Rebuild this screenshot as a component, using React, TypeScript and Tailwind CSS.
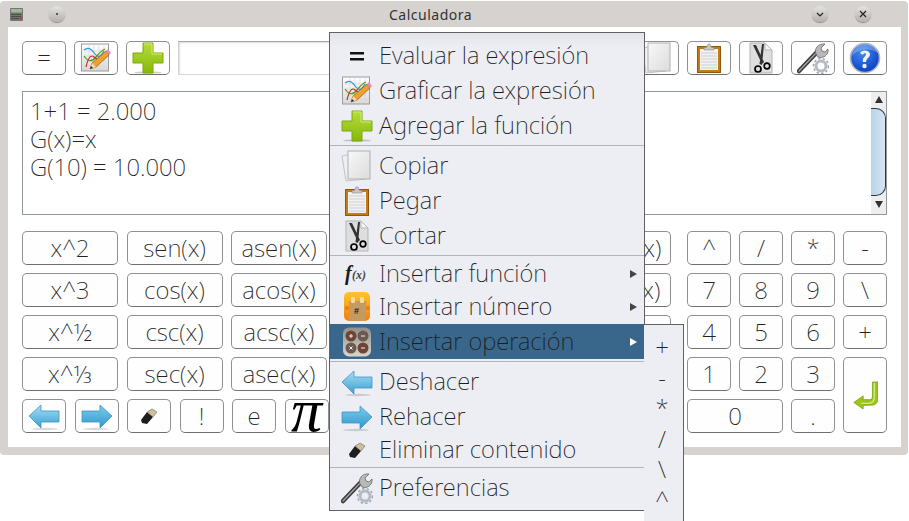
import type { ReactNode } from "react";

function Eq({ size = 32 }: { size?: number }) {
  return (
    <svg width={size} height={size} viewBox="0 0 32 32">
      <path d="M9 12h14v2.5H9zM9 18h14v2.5H9z" fill="#111" />
    </svg>
  );
}

function Graph({ size = 32 }: { size?: number }) {
  return (
    <svg width={size} height={size} viewBox="0 0 32 32">
      <defs>
        <linearGradient id="gr" x1="0" y1="0" x2="0" y2="1">
          <stop offset="0" stopColor="#ffffff" />
          <stop offset="1" stopColor="#d8d8d8" />
        </linearGradient>
      </defs>
      <rect x="1.500" y="2" width="27" height="27" fill="url(#gr)" stroke="#9a9a9a" />
      <path d="M4 9h22M4 14h22M4 19h22M4 24h22M9 3v24M14 3v24M19 3v24M24 3v24" stroke="#d9d9d9" strokeWidth=".7" />
      <path d="M4 8c5-4 8 0 11 4s6 3 9-3" fill="none" stroke="#2f9bd6" strokeWidth="1.2" />
      <path d="M4 14c4 6 8 6 12 1s6-7 9-8" fill="none" stroke="#5a9a17" strokeWidth="1.3" />
      <path d="M6 25c2-9 5-13 8-10s5 3 8-3" fill="none" stroke="#c8342b" strokeWidth="1.2" />
      <path d="M10 27l2-6 14-12 3 4-13 12z" fill="#f0a030" stroke="#8a5a10" strokeWidth=".7" />
      <path d="M10 27l2-6 4 4z" fill="#f5dcb0" />
      <path d="M10 27l1-3 2 2z" fill="#222" />
      <path d="M26 9l2-2 3 4-2 2z" fill="#e48bc0" />
    </svg>
  );
}

function Plus({ size = 32 }: { size?: number }) {
  return (
    <svg width={size} height={size} viewBox="0 0 32 32">
      <defs>
        <linearGradient id="pl" x1="0" y1="0" x2="0" y2="1">
          <stop offset="0" stopColor="#b6dd3a" />
          <stop offset="1" stopColor="#86b80c" />
        </linearGradient>
      </defs>
      <ellipse cx="16" cy="30.5" rx="14" ry="1.2" fill="#00000030" />
      <path d="M11 1h10v10h10v10H21v10H11V21H1V11h10z" fill="url(#pl)" stroke="#7fa80a" />
      <path d="M12 2h8v10h10" fill="none" stroke="#d4ee7c" />
    </svg>
  );
}

function Copy({ size = 32 }: { size?: number }) {
  return (
    <svg width={size} height={size} viewBox="0 0 32 32">
      <defs>
        <linearGradient id="cp" x1="0" y1="0" x2="1" y2="1">
          <stop offset="0" stopColor="#f8f8f8" />
          <stop offset="1" stopColor="#dcdcdc" />
        </linearGradient>
      </defs>
      <path d="M1 6l10-2v24l14 1-20 2z" fill="#eeeeee" stroke="#c4c4c4" />
      <rect x="7" y="1" width="22" height="28" fill="url(#cp)" stroke="#b0b0b0" />
    </svg>
  );
}

function Paste({ size = 32 }: { size?: number }) {
  return (
    <svg width={size} height={size} viewBox="0 0 32 32">
      <rect x="4.5" y="4.5" width="23" height="26" fill="#c47c12" stroke="#8f5a0c" />
      <rect x="7" y="7" width="18" height="21" fill="#f2f2f2" />
      <path d="M8 11h16M8 14h16M8 17h16M8 20h16M8 23h16M8 26h16" stroke="#cfcfcf" />
      <path d="M11 8V6l3-1 1-3h2l1 3 3 1v2z" fill="#c8c8c8" stroke="#8f8f8f" strokeWidth=".6" />
    </svg>
  );
}

function Cut({ size = 32 }: { size?: number }) {
  return (
    <svg width={size} height={size} viewBox="0 0 32 32">
      <path d="M5 1h15l7 7v23H5z" fill="#dedede" stroke="#b5b5b5" />
      <path d="M20 1v7h7z" fill="#f6f6f6" stroke="#b5b5b5" />
      <path d="M8 3l3 0 8 17-2 2zM17 2l2 0-2 21-2.500-1z" fill="#333" />
      <circle cx="13" cy="27" r="3" fill="none" stroke="#000" strokeWidth="1.7" />
      <circle cx="22" cy="24" r="2.800" fill="none" stroke="#000" strokeWidth="1.7" />
    </svg>
  );
}

function Tools({ size = 32 }: { size?: number }) {
  return (
    <svg width={size} height={size} viewBox="0 0 32 32">
      <path d="M2 29L21 9" stroke="#3c3c3c" strokeWidth="4.500" strokeLinecap="round" />
      <path d="M2 29L21 9" stroke="#a8a8a8" strokeWidth="1.200" strokeLinecap="round" />
      <path d="M19 12c-2-5 2-11 9-10l-4 4 1 3 3 1 3-3c1 6-5 10-10 8z" fill="#b8b8b8" stroke="#666" strokeWidth=".8" />
      <circle cx="24" cy="24" r="5" fill="none" stroke="#b4bac4" strokeWidth="3" />
      <circle cx="24" cy="24" r="7.500" fill="none" stroke="#a3a9b3" strokeWidth="1.600" strokeDasharray="2.400 2.200" />
    </svg>
  );
}

function Help({ size = 32 }: { size?: number }) {
  return (
    <svg width={size} height={size} viewBox="0 0 32 32">
      <defs>
        <radialGradient id="hp" cx=".4" cy=".3" r=".8">
          <stop offset="0" stopColor="#3f8bf0" />
          <stop offset="1" stopColor="#0636c0" />
        </radialGradient>
      </defs>
      <circle cx="16" cy="16" r="14.500" fill="url(#hp)" stroke="#aeb4bb" strokeWidth="1.600" />
      <path d="M3 14c6-7 17-9 26-3-2-6-7-9-13-9C9 2 4 8 3 14z" fill="#ffffff40" />
      <path d="M11 11c1-3 9-4 10 1 0 4-4 4-4 8h-3c-1-5 3-5 3-8 0-1-3-1-3 1z" fill="#f0f0f0" />
      <circle cx="15.500" cy="24" r="2.200" fill="#f0f0f0" />
    </svg>
  );
}

function ArrowLeft({ size = 32 }: { size?: number }) {
  return (
    <svg width={size} height={size} viewBox="0 0 32 32">
      <defs>
        <linearGradient id="al" x1="0" y1="0" x2="0" y2="1">
          <stop offset="0" stopColor="#a8def4" />
          <stop offset="1" stopColor="#38a0d2" />
        </linearGradient>
      </defs>
      <ellipse cx="17" cy="29" rx="13" ry="1.200" fill="#00000025" />
      <path d="M1 16L13 5v6h18v11H13v6z" fill="url(#al)" stroke="#3d94c0" strokeWidth=".8" />
    </svg>
  );
}

function ArrowRight({ size = 32 }: { size?: number }) {
  return (
    <svg width={size} height={size} viewBox="0 0 32 32">
      <defs>
        <linearGradient id="ar" x1="0" y1="0" x2="0" y2="1">
          <stop offset="0" stopColor="#7fcbec" />
          <stop offset="1" stopColor="#2f98cc" />
        </linearGradient>
      </defs>
      <ellipse cx="15" cy="29" rx="13" ry="1.200" fill="#00000025" />
      <path d="M31 16L19 5v6H1v11h18v6z" fill="url(#ar)" stroke="#3d94c0" strokeWidth=".8" />
    </svg>
  );
}

function Eraser({ size = 20 }: { size?: number }) {
  return (
    <svg width={size} height={size} viewBox="0 0 20 20">
      <path d="M2 14l6-8 6 5-6 7-5-1z" fill="#1e1e1e" />
      <path d="M8 6l5-3 5 3-4 5z" fill="#cfbd9c" stroke="#555" strokeWidth=".5" />
    </svg>
  );
}

function Enter() {
  return (
    <svg width="26" height="30" viewBox="0 0 28 32">
      <path d="M22 2h6v17c0 6-3 8-8 8H12v4L2 24l10-7v4h7c2 0 3-1 3-3z" fill="#9cc61c" stroke="#6f9a0a" strokeWidth=".8" />
      <path d="M24 3v15c0 5-2 7-6 7h-8" fill="none" stroke="#d4ee7c" strokeWidth="1.400" />
    </svg>
  );
}

function Fx() {
  return (
    <svg width="32" height="32" viewBox="0 0 32 32">
      <text x="4" y="22" fontFamily="'Liberation Serif',serif" fontWeight="700" fontStyle="italic" fontSize="20" fill="#1a1a1a">f</text>
      <text x="11" y="21" fontFamily="'Liberation Serif',serif" fontWeight="700" fontStyle="italic" fontSize="12" fill="#444">(x)</text>
    </svg>
  );
}

function NumberIcon() {
  return (
    <svg width="32" height="32" viewBox="0 0 32 32">
      <defs>
        <linearGradient id="nb" x1="0" y1="0" x2="0" y2="1">
          <stop offset="0" stopColor="#ffc42c" />
          <stop offset="1" stopColor="#f07e12" />
        </linearGradient>
      </defs>
      <rect x="3" y="1" width="26" height="29" rx="5" fill="url(#nb)" />
      <rect x="8" y="10" width="17" height="20" fill="#c39a5f" />
      <rect x="10" y="6" width="4" height="6" rx="1" fill="#f5dc96" />
      <rect x="19" y="6" width="4" height="6" rx="1" fill="#f5dc96" />
      <circle cx="6" cy="17" r="2" fill="#e87a12" />
      <circle cx="27" cy="17" r="2" fill="#e87a12" />
      <text x="13" y="23" fontFamily="'Liberation Sans',sans-serif" fontWeight="700" fontSize="9" fill="#222">#</text>
    </svg>
  );
}

function OperIcon() {
  return (
    <svg width="32" height="32" viewBox="0 0 32 32">
      <defs>
        <linearGradient id="op" x1="0" y1="0" x2="0" y2="1">
          <stop offset="0" stopColor="#8f8f8c" />
          <stop offset="1" stopColor="#d8d5cc" />
        </linearGradient>
      </defs>
      <rect x="2" y="1.500" width="28" height="29" rx="6" fill="url(#op)" />
      <circle cx="10" cy="10" r="5.500" fill="#6e4436" />
      <circle cx="22" cy="10" r="5.500" fill="#6c5a50" />
      <circle cx="10" cy="22" r="5.500" fill="#6c5a50" />
      <circle cx="22" cy="22" r="5.500" fill="#6e4436" />
      <path d="M8 10h4M10 8v4M20 10h4M8.500 20.500l3 3M11.500 20.500l-3 3M20 22h4" stroke="#eee" strokeWidth="1" />
    </svg>
  );
}

function CalcIcon() {
  return (
    <svg width="15" height="15" viewBox="0 0 15 15">
      <rect x="1" y="1" width="13" height="13" rx="1" fill="#74766f" />
      <rect x="2" y="2" width="11" height="3.500" fill="#9db79b" />
      <path d="M2.500 7.500h10M2.500 9.500h10M2.500 11.500h8" stroke="#2e2f2d" strokeDasharray="1.200 .8" />
      <rect x="11" y="10.500" width="2" height="2" fill="#c0392b" />
    </svg>
  );
}

function Key({ className = "", children }: { className?: string; children: ReactNode }) {
  return (
    <div className={`flex items-center justify-center rounded-[5px] border border-[#8f9090] border-b-[#6f7070] bg-[#fefefe] text-[#222] ${className}`}>
      {children}
    </div>
  );
}

function WinBtn({ children }: { children?: ReactNode }) {
  return (
    <div className="flex h-[16px] w-[16px] items-center justify-center rounded-full bg-gradient-to-b from-[#e6e4e2] to-[#b3b0ad] shadow-[0_1px_1px_#8d8a87]">
      {children}
    </div>
  );
}

const funcRows = [
  ["x^2", "sen(x)", "asen(x)", "senh(x)"],
  ["x^3", "cos(x)", "acos(x)", "cosh(x)"],
  ["x^½", "csc(x)", "acsc(x)", "csch(x)"],
  ["x^⅓", "sec(x)", "asec(x)", "sech(x)"],
];

const padRows = [
  ["^", "/", "*", "-"],
  ["7", "8", "9", "\\"],
  ["4", "5", "6", "+"],
];

function Item({
  icon,
  label,
  arrow,
  active,
  h = "h-[35px]",
}: {
  icon?: ReactNode;
  label: string;
  arrow?: boolean;
  active?: boolean;
  h?: string;
}) {
  return (
    <div className={`flex items-center ${h} ${active ? "bg-[#38678b]" : ""}`}>
      <div className="flex w-[49px] justify-center pl-[5px]">{icon}</div>
      <span className="text-[23.8px] leading-none text-[#1c1c1c]">{label}</span>
      {arrow && (
        <span className={`ml-auto mr-[7px] h-0 w-0 border-y-[4px] border-l-[7px] border-y-transparent ${active ? "border-l-white" : "border-l-[#444]"}`} />
      )}
    </div>
  );
}

function Sep({ h = "h-[5px]" }: { h?: string }) {
  return (
    <div className={`flex items-center ${h}`}>
      <div className="h-px w-full bg-[#b4b4b8]" />
    </div>
  );
}

export default function App() {
  return (
    <div className="relative h-[521px] w-[909px] overflow-hidden bg-white font-['Noto_Sans',sans-serif] font-extralight">
      {/* ventana */}
      <div className="mt-px h-[454px] w-[908px] rounded-[4px] bg-[#d6d2cf] pl-2 pr-[7px]">
        <div className="flex h-[26px] items-center">
          <div className="ml-px"><CalcIcon /></div>
          <div className="ml-[25px]">
            <WinBtn><span className="h-[2px] w-[2px] rounded-full bg-[#333]" /></WinBtn>
          </div>
          <span className="ml-[324px] text-[14px] font-normal tracking-[0.5px] text-[#333]">Calculadora</span>
          <div className="ml-auto mr-[30px] flex gap-[27px]">
            <WinBtn>
              <svg width="10" height="10" viewBox="0 0 10 10"><path d="M2 4l3 3 3-3" fill="none" stroke="#222" strokeWidth="1.200" /></svg>
            </WinBtn>
            <WinBtn>
              <svg width="10" height="10" viewBox="0 0 10 10"><path d="M2 2l6 6M8 2l-6 6" fill="none" stroke="#222" strokeWidth="1.200" /></svg>
            </WinBtn>
          </div>
        </div>

        <div className="flex h-[420px] flex-col bg-white px-[14px] pt-[14px]">
          {/* barra de herramientas */}
          <div className="flex h-[34px] gap-2 text-[24px]">
            <Key className="w-[44px]">=</Key>
            <Key className="w-[44px]"><Graph /></Key>
            <Key className="w-[44px]"><Plus /></Key>
            <div className="min-w-0 flex-1 border border-[#a5a5a5] border-b-[#d8d8d8] border-l-[#d0d0d0] shadow-[inset_1px_1px_2px_#dddddd]" />
            <Key className="w-[44px]"><Copy /></Key>
            <Key className="w-[44px]"><Paste /></Key>
            <Key className="w-[44px]"><Cut /></Key>
            <Key className="w-[44px]"><Tools /></Key>
            <Key className="w-[44px]"><Help /></Key>
          </div>

          {/* resultados */}
          <div className="mt-4 flex h-[124px] border border-[#8f969c]">
            <div className="flex-1 px-[7px] pt-[5px] text-[23.8px] leading-[28px] text-[#222]">
              <div>1+1 = 2.000</div>
              <div>G(x)=x</div>
              <div>G(10) = 10.000</div>
            </div>
            <div className="flex w-[15px] flex-col items-center bg-[#eeeeee]">
              <span className="mt-[4px] h-0 w-0 border-x-[4px] border-b-[7px] border-x-transparent border-b-[#333]" />
              <div className="mt-[5px] h-[88px] w-full rounded-r-[10px] border-y border-r border-[#27384a] bg-gradient-to-r from-[#b8d3e8] to-[#d6e6f2]" />
              <span className="mt-[5px] h-0 w-0 border-x-[4px] border-t-[7px] border-x-transparent border-t-[#333]" />
            </div>
          </div>

          {/* teclado */}
          <div className="mt-4 flex justify-between text-[24px]">
            <div className="flex w-[649px] flex-col gap-2">
              {funcRows.map((row) => (
                <div key={row[0]} className="flex h-[34px]">
                  {row.slice(0, 3).map((k, i) => (
                    <Key key={k} className={`w-[96px] ${i > 0 ? "ml-[8.5px]" : ""}`}>{k}</Key>
                  ))}
                  <Key className="ml-auto w-[96px]">{row[3]}</Key>
                </div>
              ))}
              <div className="flex h-[34px] gap-[8.5px]">
                <Key className="w-[44px]"><ArrowLeft /></Key>
                <Key className="w-[44px]"><ArrowRight /></Key>
                <Key className="w-[44px]"><Eraser /></Key>
                <Key className="w-[44px]">!</Key>
                <Key className="w-[44px]">e</Key>
                <Key className="w-[44px] font-['Liberation_Serif',serif] text-[62px] font-normal italic leading-[32px] text-black">
                  <span className="mb-[12px]">π</span>
                </Key>
              </div>
            </div>

            <div className="grid w-[200px] grid-cols-4 grid-rows-5 gap-2">
              {padRows.flat().map((k) => (
                <Key key={k} className="h-[34px]">{k}</Key>
              ))}
              {["1", "2", "3"].map((k) => (
                <Key key={k} className="h-[34px]">{k}</Key>
              ))}
              <Key className="row-span-2"><Enter /></Key>
              <Key className="col-span-2 h-[34px]">0</Key>
              <Key className="h-[34px]">.</Key>
            </div>
          </div>
        </div>
      </div>

      {/* menu contextual */}
      <div className="absolute left-[329px] top-[32px] w-[316px] border border-[#5f6165] bg-gradient-to-b from-[#e3e4e8] via-[#edeef3] via-[3%] to-[#edeef3] pb-[5px] pt-[5px]">
        <Item icon={<Eq />} label="Evaluar la expresión" />
        <Item icon={<Graph />} label="Graficar la expresión" />
        <Item icon={<Plus />} label="Agregar la función" />
        <Sep />
        <Item icon={<Copy />} label="Copiar" />
        <Item icon={<Paste />} label="Pegar" />
        <Item icon={<Cut />} label="Cortar" />
        <Sep />
        <Item icon={<Fx />} label="Insertar función" arrow h="h-[32px]" />
        <Item icon={<NumberIcon />} label="Insertar número" arrow h="h-[34px]" />
        <Item icon={<OperIcon />} label="Insertar operación" arrow active />
        <Sep />
        <Item icon={<ArrowLeft />} label="Deshacer" />
        <Item icon={<ArrowRight />} label="Rehacer" />
        <Item icon={<Eraser />} label="Eliminar contenido" h="h-[31px]" />
        <Sep />
        <Item icon={<Tools />} label="Preferencias" />
      </div>

      {/* submenu */}
      <div className="absolute left-[644px] top-[324px] h-[220px] w-[40px] border border-l-0 border-[#5f6165] bg-[#edeef3] text-[24px] text-[#222]">
        {["+", "-", "*", "/", "\\", "^"].map((s) => (
          <div key={s} className="flex h-[30.5px] items-center justify-center pr-[3px] first:mt-[7px]">{s}</div>
        ))}
      </div>
    </div>
  );
}
